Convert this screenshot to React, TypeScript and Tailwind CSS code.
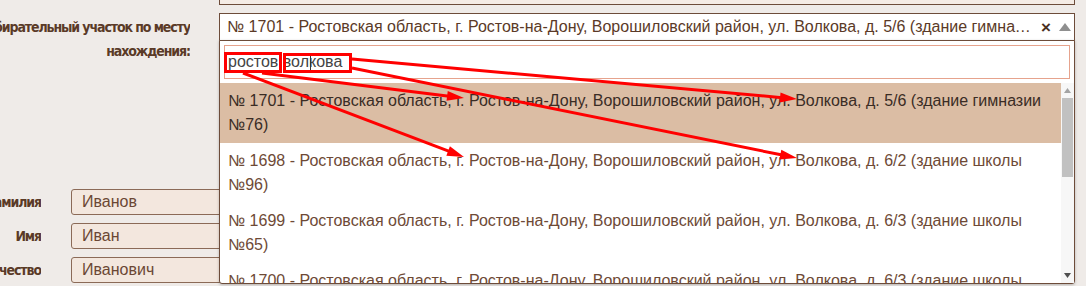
import React from 'react';

const labelFont = { fontFamily: '"Liberation Sans Narrow", "DejaVu Sans Condensed", "Liberation Sans", sans-serif' };
const bodyFont = { fontFamily: '"Liberation Sans", Arial, sans-serif' };

const options = [
  { id: 1701, text: '№ 1701 - Ростовская область, г. Ростов-на-Дону, Ворошиловский район, ул. Волкова, д. 5/6 (здание гимназии №76)' },
  { id: 1698, text: '№ 1698 - Ростовская область, г. Ростов-на-Дону, Ворошиловский район, ул. Волкова, д. 6/2 (здание школы №96)' },
  { id: 1699, text: '№ 1699 - Ростовская область, г. Ростов-на-Дону, Ворошиловский район, ул. Волкова, д. 6/3 (здание школы №65)' },
  { id: 1700, text: '№ 1700 - Ростовская область, г. Ростов-на-Дону, Ворошиловский район, ул. Волкова, д. 6/3 (здание школы №65)' },
];

const person = [
  { label: 'Фамилия', value: 'Иванов' },
  { label: 'Имя', value: 'Иван' },
  { label: 'Отчество', value: 'Иванович' },
];

// red arrow used by the annotation layer
function Arrow({ x1, y1, x2, y2 }: { x1: number; y1: number; x2: number; y2: number }) {
  const dx = x2 - x1;
  const dy = y2 - y1;
  const len = Math.sqrt(dx * dx + dy * dy);
  const ux = dx / len;
  const uy = dy / len;
  const head = 17;
  const half = 5;
  const bx = x2 - ux * head;
  const by = y2 - uy * head;
  const pts = `${x2},${y2} ${bx - uy * half},${by + ux * half} ${bx + uy * half},${by - ux * half}`;
  return (
    <g>
      <line x1={x1} y1={y1} x2={bx + ux * 2} y2={by + uy * 2} stroke="#ff0000" strokeWidth={3} />
      <polygon points={pts} fill="#ff0000" />
    </g>
  );
}

export default function App() {
  return (
    <div className="relative w-[1086px] h-[286px] overflow-hidden bg-[#efebe8]" style={bodyFont}>
      {/* bottom of previous field */}
      <div className="flex h-[5px]">
        <div className="w-[219px] shrink-0" />
        <div className="w-[856px] border-x border-b border-[#6d4c3a] bg-[#f5ece5]" />
      </div>

      <div className="mt-[8px] flex items-start">
        <div className="w-[190px] shrink-0 overflow-hidden pt-[2px]" style={labelFont}>
          <div className="flex justify-end">
            <span className="whitespace-nowrap text-[14px] leading-6 font-bold tracking-[-1.1px] text-[#5a3a27]">Избирательный участок по месту</span>
          </div>
          <div className="flex justify-end">
            <span className="whitespace-nowrap text-[14px] leading-6 font-bold tracking-[-1.1px] text-[#5a3a27]">нахождения:</span>
          </div>
        </div>
        <div className="ml-[29px] w-[856px] h-[28px] flex items-center border border-[#6d4c3a] bg-white pl-[7px] pr-[3px]">
          <span className="flex-1 truncate text-[16px] text-[#5b3a27]">
            № 1701 - Ростовская область, г. Ростов-на-Дону, Ворошиловский район, ул. Волкова, д. 5/6 (здание гимназии №76)
          </span>
          <span className="ml-[4px] text-[17px] font-bold leading-none text-[#4a3020]">×</span>
          <svg width="12" height="8" viewBox="0 0 12 8" className="ml-[8px]">
            <polygon points="6,0 12,8 0,8" fill="#8f8f8f" />
          </svg>
        </div>
      </div>

      <div className="mt-[126px] flex flex-col gap-[8px]">
        {person.map((p) => (
          <div key={p.label} className="flex items-center h-[26px]">
            <div className="w-[41px] shrink-0 overflow-hidden flex justify-end" style={labelFont}>
              <span className="whitespace-nowrap text-[14px] font-bold tracking-[-1.1px] text-[#5a3a27]">{p.label}</span>
            </div>
            <div className="ml-[30px] w-[300px] h-full flex items-center rounded-[3px] border border-[#8b6a57] bg-[#f3e7de] pl-[10px] text-[16px] text-[#6b4734]">
              {p.value}
            </div>
          </div>
        ))}
      </div>

      {/* open dropdown */}
      <div className="absolute left-[219px] top-[40px] w-[856px] h-[244px] flex flex-col border border-[#6d4c3a] rounded-b-[3px] bg-white shadow-[0_1px_3px_rgba(0,0,0,0.25)]">
        <div className="px-[4px] pt-[4px] pb-[4px]">
          <div className="h-[34px] flex items-center border border-[#e6a38d] pl-[3px] text-[16px] text-[#444]">
            ростов волкова
          </div>
        </div>
        <div className="flex flex-1 min-h-0">
          <div className="flex-1 overflow-hidden">
            {options.map((o, i) => (
              <div
                key={o.id}
                className={
                  i === 0
                    ? 'bg-[#dbbda4] px-[8px] py-[6px] text-[16px] leading-6 text-[#3a2c24]'
                    : 'px-[8px] py-[6px] text-[16px] leading-6 text-[#6e4a36]'
                }
              >
                {o.text}
              </div>
            ))}
          </div>
          <div className="w-[13px] shrink-0 flex flex-col items-center bg-[#f7f7f7]">
            <svg width="7" height="5" viewBox="0 0 7 5" className="mt-[5px]">
              <polygon points="3.5,0 7,5 0,5" fill="#a3a3a3" />
            </svg>
            <div className="mt-[5px] w-[11px] h-[79px] bg-[#c1c1c1]" />
            <div className="flex-1" />
            <svg width="7" height="5" viewBox="0 0 7 5" className="mb-[5px]">
              <polygon points="0,0 7,0 3.5,5" fill="#505050" />
            </svg>
          </div>
        </div>
      </div>

      {/* annotation layer */}
      <svg className="pointer-events-none absolute left-0 top-0" width="1086" height="286">
        <line x1="310.5" y1="55" x2="310.5" y2="70" stroke="#333" strokeWidth={1} />
        <rect x="225.5" y="53.5" width="55" height="18" fill="none" stroke="#ff0000" strokeWidth={3} />
        <rect x="284.5" y="54.5" width="66" height="17" fill="none" stroke="#ff0000" strokeWidth={3} />
        <Arrow x1={262} y1={73} x2={464} y2={98} />
        <Arrow x1={243} y1={73} x2={464} y2={157} />
        <Arrow x1={352} y1={59} x2={797} y2={99} />
        <Arrow x1={352} y1={68} x2={797} y2={158} />
      </svg>
    </div>
  );
}
